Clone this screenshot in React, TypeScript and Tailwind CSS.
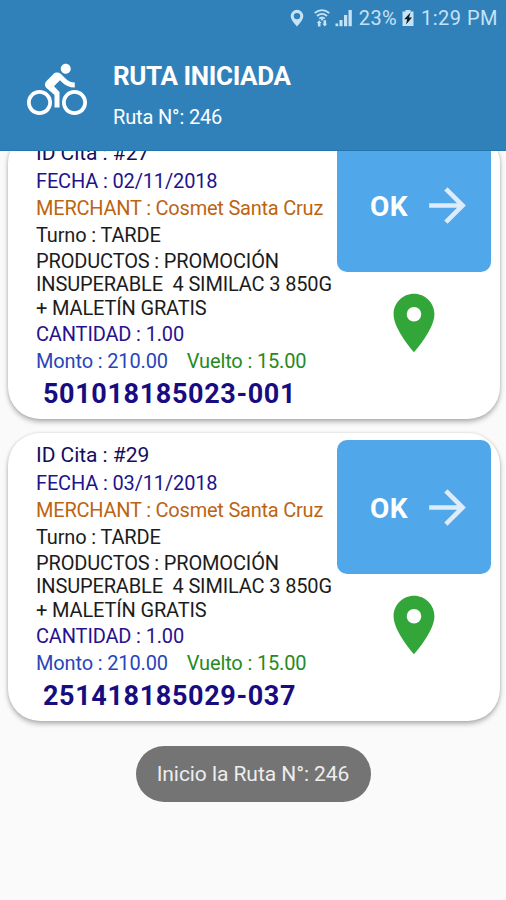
import { MdArrowForward, MdDirectionsBike, MdPlace } from "react-icons/md";

type Cita = {
  id: string;
  fecha: string;
  merchant: string;
  turno: string;
  productos: string[];
  cantidad: string;
  monto: string;
  vuelto: string;
  codigo: string;
};

const productos = ["PROMOCIÓN", "INSUPERABLE  4 SIMILAC 3 850G", "+ MALETÍN GRATIS"];

const citas: Cita[] = [
  {
    id: "#27",
    fecha: "02/11/2018",
    merchant: "Cosmet Santa Cruz",
    turno: "TARDE",
    productos,
    cantidad: "1.00",
    monto: "210.00",
    vuelto: "15.00",
    codigo: "501018185023-001",
  },
  {
    id: "#29",
    fecha: "03/11/2018",
    merchant: "Cosmet Santa Cruz",
    turno: "TARDE",
    productos,
    cantidad: "1.00",
    monto: "210.00",
    vuelto: "15.00",
    codigo: "251418185029-037",
  },
];

function StatusBar() {
  return (
    <div className="flex h-9 items-center justify-end pr-2 text-[20px] text-[#c6e2f5]">
      {/* Location */}
      <svg width="14" height="18" viewBox="0 0 14 18" className="mr-[10px]">
        <path
          fillRule="evenodd"
          fill="currentColor"
          d="M7 .8A6.300 6.300 0 0 0 .7 7.100C.7 11.300 7 17.500 7 17.500s6.300-6.200 6.300-10.400A6.300 6.300 0 0 0 7 .8zm0 3.100a3.200 3.200 0 1 1 0 6.400 3.200 3.200 0 0 1 0-6.400z"
        />
      </svg>
      {/* Wifi with transfer arrows */}
      <svg width="16" height="18" viewBox="0 0 16 18" className="mr-[5px]">
        <g fill="none" stroke="currentColor" strokeWidth="1.800">
          <path d="M.7 4Q8-1.600 15.300 4" />
          <path d="M3 7Q8 2.800 13 7" />
          <path d="M5.200 9.700Q8 7.200 10.800 9.700" />
        </g>
        <path d="M6.200 9.500h3.600L8 12z" fill="currentColor" />
        <path d="M2.800 14l2.400-2.800L7.600 14H6.500v3.500H3.900V14zM8.400 14.700h1.100v-3.500h2.600v3.500h1.100l-2.400 2.800z" fill="currentColor" />
      </svg>
      {/* Signal */}
      <svg width="18" height="18" viewBox="0 0 18 18" className="mr-[6px]" fill="currentColor">
        <rect x="0.500" y="14.500" width="2.700" height="2.700" />
        <rect x="4.500" y="11" width="3" height="6.200" />
        <rect x="9" y="6" width="3.200" height="11.200" />
        <rect x="13.500" y="1" width="3.300" height="16.200" />
      </svg>
      <span className="tracking-[0.3px]">23%</span>
      {/* Battery */}
      <svg width="12" height="18" viewBox="0 0 12 18" className="ml-[5px] mr-[7px]">
        <path d="M3.500 1h5v1.500H11.500V17H.5V2.500h3z" fill="currentColor" />
        <path d="M8.500 3.500L2.200 10.200h3L4 15.500l6-7H7z" fill="#0b1a26" />
      </svg>
      <span className="tracking-[0.5px]">1:29 PM</span>
    </div>
  );
}

function CitaCard({ cita }: { cita: Cita }) {
  return (
    <div className="flex h-[288px] justify-between rounded-[32px] bg-white pl-7 pr-[9px] shadow-[0_3px_5px_rgba(0,0,0,0.28),0_0_3px_rgba(0,0,0,0.12)]">
      <div className="w-[298px] whitespace-pre pt-2 text-[20px] tracking-[-0.15px] text-[#1c1c1c]">
        <p className="text-[21px] leading-[29px] tracking-[-0.05px] text-[#120f5e]">ID Cita : {cita.id}</p>
        <p className="leading-[27px] text-[#1f148c]">FECHA : {cita.fecha}</p>
        <p className="leading-[27px] tracking-[-0.22px] text-[#bd6412]">MERCHANT : {cita.merchant}</p>
        <p className="leading-[26px]">Turno : {cita.turno}</p>
        <div className="pb-px pt-[2px] leading-[23.300px]">
          <p>PRODUCTOS : {cita.productos[0]}</p>
          <p>{cita.productos[1]}</p>
          <p>{cita.productos[2]}</p>
        </div>
        <p className="leading-[27px] text-[#25128c]">CANTIDAD : {cita.cantidad}</p>
        <div className="flex gap-[19px] leading-[26px]">
          <span className="text-[#2a45b8]">Monto : {cita.monto}</span>
          <span className="text-[#268a1e]">Vuelto : {cita.vuelto}</span>
        </div>
        <p className="pl-[7px] text-[27px] font-bold leading-[41px] tracking-[0.63px] text-[#170d80]">
          {cita.codigo}
        </p>
      </div>
      <div className="flex w-[154px] shrink-0 flex-col items-center pt-[7px]">
        <button className="flex h-[134px] w-full items-center rounded-[10px] bg-[#50a8ea] pl-[33px]">
          <span className="w-[50px] pt-[3px] text-left text-[28px] font-bold tracking-[0.4px] text-white">OK</span>
          <MdArrowForward size={55} className="text-[#dcecfb]" />
        </button>
        <MdPlace size={70} className="mt-4 text-[#33a639]" />
      </div>
    </div>
  );
}

export default function App() {
  return (
    <div className="flex h-[900px] w-[506px] flex-col overflow-hidden bg-[#fafafa] font-['Roboto',sans-serif]">
      <header className="h-[151px] shrink-0 border-b border-[#2475ab] bg-[#3081ba]">
        <StatusBar />
        <div className="flex items-start pl-[27px] pt-6 text-white">
          <MdDirectionsBike size={60} />
          <div className="pl-[26px]">
            <h1 className="text-[26px] font-bold leading-[32px] tracking-[-0.38px]">RUTA INICIADA</h1>
            <p className="pt-[11px] text-[20px] leading-[28px] tracking-[-0.15px]">Ruta N°: 246</p>
          </div>
        </div>
      </header>

      <main className="flex h-[595px] shrink-0 flex-col overflow-hidden pl-2 pr-1.5">
        <div className="-mt-5 flex flex-col gap-[14px]">
          {citas.map((cita) => (
            <CitaCard key={cita.id} cita={cita} />
          ))}
        </div>
      </main>

      {/* Toast */}
      <div className="flex h-14 w-[235px] shrink-0 items-center justify-center self-center rounded-full bg-[#747474] pt-0.5 text-[21px] tracking-[-0.06px] text-[#ededed]">
        Inicio la Ruta N°: 246
      </div>
    </div>
  );
}
